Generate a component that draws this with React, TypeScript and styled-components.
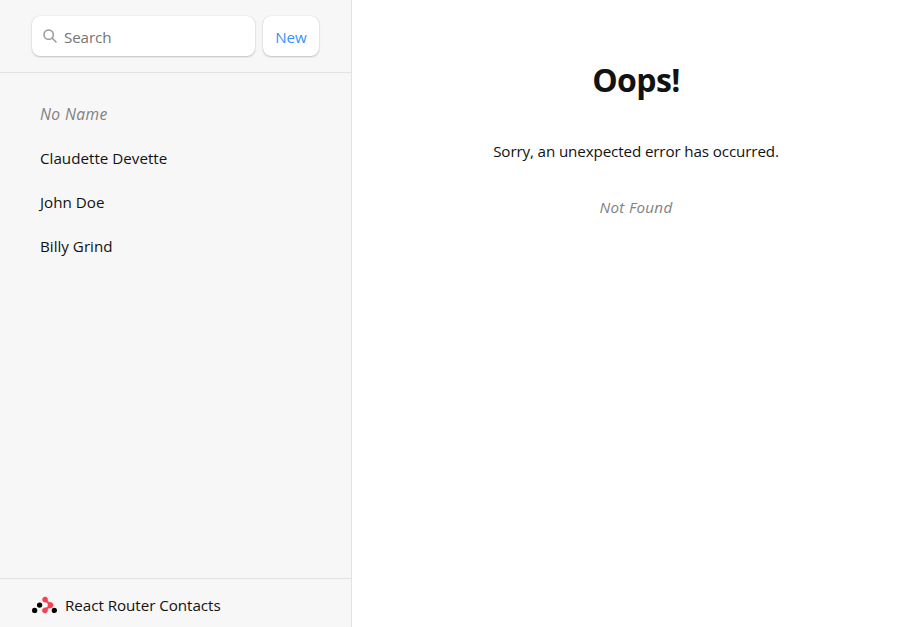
import React from "react";
import styled, { createGlobalStyle } from "styled-components";

const GlobalStyle = createGlobalStyle`
  *, *::before, *::after { box-sizing: border-box; }
  html, body, #root { height: 100%; }
  body {
    margin: 0;
    line-height: 1.5;
    color: #121212;
    background: #fff;
    font-family: "Open Sans", "Noto Sans", sans-serif;
  }
`;

const Layout = styled.div`
  display: flex;
  width: 100%;
  height: 100vh;
  overflow: hidden;
`;

const Sidebar = styled.aside`
  display: flex;
  flex-direction: column;
  flex: 0 0 352px;
  background: #f7f7f7;
  border-right: 1px solid #e3e3e3;
`;

const Toolbar = styled.div`
  display: flex;
  align-items: center;
  gap: 8px;
  height: 73px;
  padding: 0 32px;
  border-bottom: 1px solid #e3e3e3;
`;

const SearchForm = styled.form`
  position: relative;
  flex: 1;
  min-width: 0;
`;

const SearchIcon = styled.svg`
  position: absolute;
  left: 10px;
  top: 12px;
  width: 16px;
  height: 16px;
`;

const raised = `
  height: 40px;
  border: none;
  border-radius: 8px;
  background: #fff;
  box-shadow: 0 0 1px rgba(0, 0, 0, 0.2), 0 1px 2px rgba(0, 0, 0, 0.2);
  font-family: inherit;
  font-size: 15.2px;
  line-height: 22px;
  margin: 0;
`;

const SearchInput = styled.input`
  ${raised}
  display: block;
  width: 100%;
  padding: 10px 12px 8px 32px;
  letter-spacing: -0.12px;
  outline: none;
  &::placeholder { color: #757575; opacity: 1; }
`;

const NewButton = styled.button`
  ${raised}
  width: 56px;
  padding: 10px 0 8px;
  color: #3992ff;
`;

const Nav = styled.nav`
  flex: 1;
  padding: 17px 32px 0;
`;

const List = styled.ul`
  list-style: none;
  margin: 0;
  padding: 0;
`;

const Contact = styled.li<{ $unnamed?: boolean }>`
  height: 40px;
  margin: 4px 0;
  padding: 8px;
  white-space: pre;
  font-size: ${(p) => (p.$unnamed ? "15.6px" : "15.2px")};
  line-height: 24px;
  font-style: ${(p) => (p.$unnamed ? "italic" : "normal")};
  letter-spacing: ${(p) => (p.$unnamed ? "0.4px" : "0")};
  color: ${(p) => (p.$unnamed ? "#818181" : "inherit")};
`;

const Footer = styled.footer`
  display: flex;
  align-items: center;
  gap: 8px;
  height: 49px;
  padding: 5px 32px 0;
  border-top: 1px solid #e3e3e3;
  font-size: 15.2px;
  letter-spacing: -0.05px;
`;

const Logo = styled.svg`
  margin-top: -2px;
`;

const Detail = styled.main`
  flex: 1;
  padding: 56px 0 0 5px;
  text-align: center;
`;

const Title = styled.h1`
  margin: 0;
  font-size: 32px;
  line-height: 47px;
  font-weight: 700;
  letter-spacing: -0.6px;
`;

const Message = styled.p<{ $muted?: boolean }>`
  margin: ${(p) => (p.$muted ? "32px" : "36px")} 0 0;
  font-size: 15.2px;
  line-height: 24px;
  font-style: ${(p) => (p.$muted ? "italic" : "normal")};
  letter-spacing: ${(p) => (p.$muted ? "0.3px" : "-0.13px")};
  color: ${(p) => (p.$muted ? "#818181" : "inherit")};
`;

const contacts = ["", "Claudette Devette", "John Doe", "Billy Grind"];

const RouterLogo = () => (
  <Logo width="25" height="18" viewBox="0 0 25 18" aria-hidden="true">
    <path
      fill="#f44250"
      stroke="#f44250"
      strokeWidth="0.4"
      d="M19.4127 6.4904C18.6984 6.26581 18.3295 6.34153 17.5802 6.25965C16.4219 6.13331 15.9604 5.68062 15.7646 4.51554C15.6551 3.86516 15.7844 2.9129 15.5048 2.32334C14.9699 1.19921 13.7183 0.695046 12.461 0.982805C11.3994 1.22611 10.516 2.28708 10.4671 3.37612C10.4112 4.61957 11.1197 5.68054 12.3363 6.04667C12.9143 6.22097 13.5284 6.3087 14.132 6.35315C15.2391 6.43386 15.3241 7.04923 15.6236 7.55574C15.8124 7.87508 15.9954 8.18975 15.9954 9.14193C15.9954 10.0941 15.8112 10.4088 15.6236 10.7281C15.3241 11.2334 14.9547 11.5645 13.8477 11.6464C13.244 11.6908 12.6288 11.7786 12.0519 11.9528C10.8353 12.3201 10.1268 13.3799 10.1828 14.6234C10.2317 15.7124 11.115 16.7734 12.1766 17.0167C13.434 17.3056 14.6855 16.8003 15.2204 15.6762C15.5013 15.0866 15.6551 14.4187 15.7646 13.7683C15.9616 12.6032 16.423 12.1505 17.5802 12.0242C18.3295 11.9423 19.1049 12.0242 19.8071 11.6253C20.5491 11.0832 21.212 10.2696 21.212 9.14192C21.212 8.01428 20.4976 6.83197 19.4127 6.4904Z"
    />
    <g fill="#000">
      <circle cx="7.6" cy="9.09" r="2.66" />
      <circle cx="2.64" cy="14.44" r="2.66" />
      <circle cx="22.37" cy="14.44" r="2.66" />
    </g>
  </Logo>
);

export default function App() {
  return (
    <>
      <GlobalStyle />
      <Layout>
        <Sidebar>
          <Toolbar>
            <SearchForm>
              <SearchIcon viewBox="0 0 24 24" fill="none" stroke="#999" strokeWidth="2.3" strokeLinecap="round">
                <circle cx="10" cy="10" r="7" />
                <path d="M15 15L21 21" />
              </SearchIcon>
              <SearchInput placeholder="Search" aria-label="Search contacts" />
            </SearchForm>
            <NewButton type="button">New</NewButton>
          </Toolbar>
          <Nav>
            <List>
              {contacts.map((name) => (
                <Contact key={name} $unnamed={!name}>{name || "No Name"}</Contact>
              ))}
            </List>
          </Nav>
          <Footer><RouterLogo />React Router Contacts</Footer>
        </Sidebar>
        <Detail>
          <Title>Oops!</Title>
          <Message>Sorry, an unexpected error has occurred.</Message>
          <Message $muted>Not Found</Message>
        </Detail>
      </Layout>
    </>
  );
}
